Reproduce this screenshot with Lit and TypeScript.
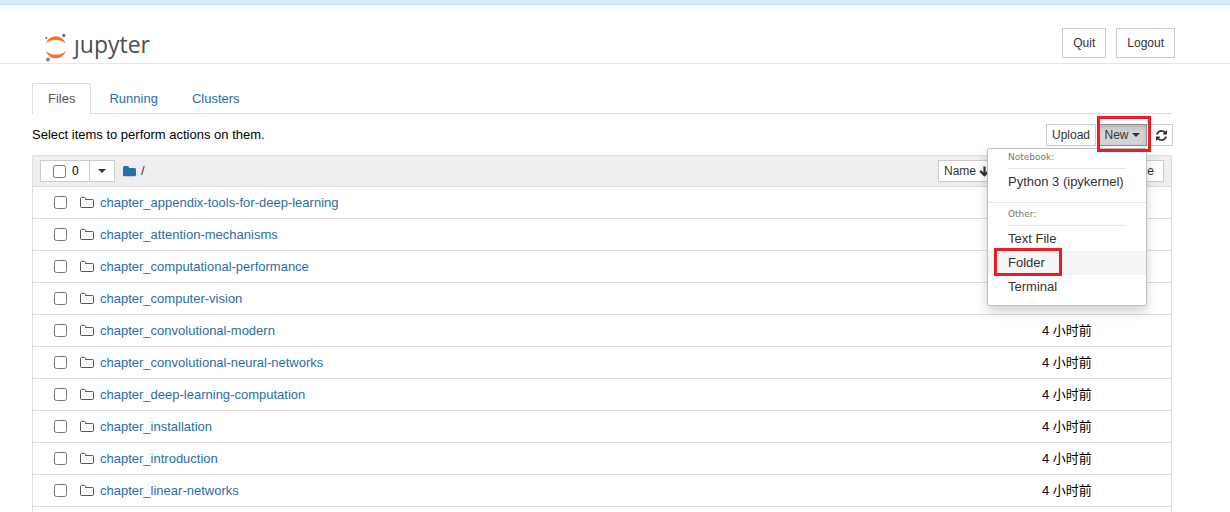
import { LitElement, html, css } from "lit";
import { customElement } from "lit/decorators.js";

const folders = [
  "chapter_appendix-tools-for-deep-learning",
  "chapter_attention-mechanisms",
  "chapter_computational-performance",
  "chapter_computer-vision",
  "chapter_convolutional-modern",
  "chapter_convolutional-neural-networks",
  "chapter_deep-learning-computation",
  "chapter_installation",
  "chapter_introduction",
  "chapter_linear-networks",
];

const planet = html`<svg class="planet" viewBox="0 0 24 30" aria-hidden="true">
  <path d="M1.800 11.600C3.500 7 7.300 4.200 11.800 4.200s8.300 2.800 10 7.400C19.500 9.200 16 7.900 11.800 7.900S4.100 9.200 1.800 11.600Z" fill="#f37726" />
  <path d="M1.800 18.900C3.500 23.500 7.300 26.300 11.800 26.300s8.300-2.800 10-7.400C19.500 21.300 16 22.600 11.800 22.600S4.100 21.300 1.800 18.900Z" fill="#f37726" />
  <circle cx="19.800" cy="3.500" r="1.700" fill="#767677" />
  <circle cx="2.300" cy="6" r="1.100" fill="#767677" />
  <circle cx="4" cy="27.500" r="2.100" fill="#8f8f90" />
</svg>`;

const openFolder = html`<svg class="folder" viewBox="0 0 14 12" aria-hidden="true">
  <path d="M.5 1.500q0-1 1-1h3q1 0 1 1v1h6.800q1.200 0 1.200 1.100v5.900q0 1-1 1h-11q-1 0-1-1Z" fill="none" stroke="#555" />
</svg>`;

const solidFolder = html`<svg class="solid" viewBox="0 0 13 11" aria-hidden="true">
  <path d="M0 1.500Q0 0 1.500 0h3Q6 0 6 1.500V2h5.500Q13 2 13 3.400v5.400Q13 10.300 11.500 10.300H1.500Q0 10.300 0 8.800Z" fill="#296eaa" />
</svg>`;

const downArrow = html`<svg class="arrow" viewBox="0 0 11 11" aria-hidden="true">
  <path d="M5.500.5v8.500M1.200 4.900 5.500 9.200l4.300-4.300" fill="none" stroke="#333" stroke-width="2.200" />
</svg>`;

const refresh = html`<svg class="refresh" viewBox="0 0 1536 1536" aria-hidden="true">
  <path fill="#333" d="M1511 928q0 5-1 7-64 268-268 434.500T764 1536q-146 0-282.500-55T238 1324l-129 129q-19 19-45 19t-45-19-19-45V960q0-26 19-45t45-19h448q26 0 45 19t19 45-19 45l-137 137q71 66 161 102t187 36q134 0 250-65t186-179q11-17 53-117 8-23 30-23h192q13 0 22.500 9.500t9.500 22.500zm25-800v448q0 26-19 45t-45 19h-448q-26 0-45-19t-19-45 19-45l138-138Q969 256 768 256q-134 0-250 65T332 500q-11 17-53 117-8 23-30 23H50q-13 0-22.500-9.500T18 608v-7q65-268 270-434.500T768 0q146 0 284 55.500T1297 212l130-129q19-19 45-19t45 19 19 45z" />
</svg>`;

@customElement("app-root")
export class AppRoot extends LitElement {
  static styles = css`
    :host {
      display: flex;
      flex-direction: column;
      height: 100vh;
      overflow: hidden;
      background: #fff;
      color: #000;
      font: 13px/20px "Liberation Sans", "Noto Sans CJK SC", sans-serif;
    }
    * { box-sizing: border-box; }
    a { color: #296eaa; text-decoration: none; }
    button { font: inherit; font-size: 12px; color: #333; background: #fff; border: 1px solid #ccc; padding: 0; cursor: pointer; }
    input { margin: 0; width: 13px; height: 13px; flex: none; }
    svg { display: block; flex: none; }
    .notice { height: 5px; flex: none; background: #d9edf7; border-bottom: 1px solid #bce8f1; }
    .header {
      display: flex;
      justify-content: space-between;
      align-items: flex-start;
      flex: none;
      padding: 23px 55px 5px 44px;
      border-bottom: 1px solid #e7e7e7;
    }
    .logo { display: flex; height: 30px; gap: 6px; padding-top: 4px; color: #4e4e4e; font: 23px/24px "Open Sans", sans-serif; }
    .planet { width: 24px; height: 30px; }
    .session { display: flex; gap: 10px; }
    .session button { height: 30px; padding: 0 10px; }
    main { flex: 1; min-height: 0; display: flex; flex-direction: column; margin: 19px 58px 0 32px; }
    .tabs { display: flex; gap: 2px; flex: none; border-bottom: 1px solid #ddd; }
    .tabs a { padding: 5px 15px 4px; border: 1px solid transparent; border-bottom: 0; }
    .tabs .active { color: #555; background: #fff; border-color: #ddd; border-radius: 2px 2px 0 0; margin-bottom: -1px; padding-bottom: 5px; }
    .toolbar { display: flex; justify-content: space-between; align-items: center; flex: none; padding: 10px 0 9px; margin-right: -1px; }
    .actions { display: flex; }
    .actions button { height: 22px; }
    .upload { width: 50px; }
    .menu-anchor { position: relative; margin-left: 1px; }
    .new {
      display: flex;
      align-items: center;
      justify-content: center;
      gap: 3px;
      width: 50px;
      background: #d4d4d4;
      border-color: #8c8c8c;
      box-shadow: inset 0 3px 5px rgba(0, 0, 0, 0.125);
    }
    .reload { display: flex; align-items: center; justify-content: flex-end; width: 26px; padding-right: 5px; border-left-color: transparent; }
    .refresh { width: 11px; height: 11px; }
    .caret { border: 4px solid transparent; border-top-color: #333; border-bottom: 0; }
    .mark { position: absolute; border: 3px solid #ed1c24; pointer-events: none; z-index: 3; }
    .mark-new { inset: -8px -4px -6px 0; }
    .mark-folder { inset: -3px 84px -1px 6px; }
    .menu {
      position: absolute;
      z-index: 2;
      top: 24px;
      right: 0;
      width: 160px;
      margin: 0;
      padding: 0 0 6px;
      list-style: none;
      background: #fff;
      border: 1px solid #bfbfbf;
      border-radius: 2px;
      box-shadow: 0 6px 12px rgba(0, 0, 0, 0.175);
    }
    .menu li { position: relative; }
    .menu a { display: block; padding: 2px 20px; color: #333; white-space: nowrap; }
    .menu .hover { background: #f5f5f5; }
    .menu .title { margin: 0 20px 1px; padding-bottom: 2px; border-bottom: 1px solid #e5e5e5; color: #777; font: 9px/17px "DejaVu Sans", sans-serif; }
    .menu .divider { height: 1px; margin: 8px 0 3px; background: #e5e5e5; }
    .list { flex: 1; border: 1px solid #ddd; border-bottom: 0; border-radius: 2px 2px 0 0; }
    table { width: 100%; border-collapse: separate; border-spacing: 0; table-layout: fixed; }
    .when { width: 129px; }
    th, td { padding: 0; font-weight: normal; text-align: left; border-bottom: 1px solid #ddd; height: 32px; }
    th { background: #eee; height: 31px; }
    .select { display: flex; align-items: center; padding-left: 7px; }
    .count { display: flex; align-items: center; gap: 6px; width: 50px; height: 22px; padding-left: 12px; background: #fff; border: 1px solid #ccc; font-size: 12px; }
    .more { display: flex; align-items: center; justify-content: center; width: 26px; height: 22px; margin-left: -1px; }
    .crumb { display: flex; align-items: center; gap: 5px; margin-left: 8px; color: #333; }
    .solid { width: 13px; height: 11px; }
    .sort { display: flex; justify-content: flex-end; padding-right: 7px; }
    .sort button { display: flex; flex: none; align-items: center; gap: 3px; height: 22px; padding: 0 5px; white-space: nowrap; margin-left: -1px; }
    .sort .wide { padding: 0 9px; }
    .sort .modified { width: 106px; }
    .arrow { width: 11px; height: 11px; }
    .item { display: flex; align-items: center; padding-left: 21px; }
    .folder { width: 14px; height: 12px; margin: 0 6px 0 13px; }
  `;

  render() {
    return html`
      <div class="notice"></div>
      <header class="header">
        <a class="logo" href="#" aria-label="jupyter">${planet}<span>ȷupyter</span></a>
        <div class="session"><button>Quit</button><button>Logout</button></div>
      </header>
      <main>
        <nav class="tabs">
          <a class="active" href="#files">Files</a>
          <a href="#running">Running</a>
          <a href="#clusters">Clusters</a>
        </nav>
        <div class="toolbar">
          <span>Select items to perform actions on them.</span>
          <div class="actions">
            <button class="upload">Upload</button>
            <div class="menu-anchor">
              <button class="new" aria-expanded="true">New<span class="caret"></span></button>
              <span class="mark mark-new"></span>
              <ul class="menu">
                <li class="title">Notebook:</li>
                <li><a href="#python3">Python 3 (ipykernel)</a></li>
                <li class="divider"></li>
                <li class="title">Other:</li>
                <li><a href="#text">Text File</a></li>
                <li><a class="hover" href="#folder">Folder</a><span class="mark mark-folder"></span></li>
                <li><a href="#terminal">Terminal</a></li>
              </ul>
            </div>
            <button class="reload" aria-label="Refresh">${refresh}</button>
          </div>
        </div>
        <div class="list">
          <table>
            <colgroup><col /><col class="when" /></colgroup>
            <thead>
              <tr>
                <th>
                  <div class="select">
                    <label class="count"><input type="checkbox" />0</label>
                    <button class="more" aria-label="Select by type"><span class="caret"></span></button>
                    <a class="crumb" href="#root">${solidFolder}<span>/</span></a>
                  </div>
                </th>
                <th>
                  <div class="sort">
                    <button>Name ${downArrow}</button>
                    <button class="modified wide">Last Modified</button>
                    <button class="wide">File size</button>
                  </div>
                </th>
              </tr>
            </thead>
            <tbody>
              ${folders.map(
                (name) => html`<tr>
                  <td>
                    <div class="item">
                      <input type="checkbox" aria-label=${name} />${openFolder}<a href="#${name}">${name}</a>
                    </div>
                  </td>
                  <td>4 小时前</td>
                </tr>`
              )}
            </tbody>
          </table>
        </div>
      </main>
    `;
  }
}
